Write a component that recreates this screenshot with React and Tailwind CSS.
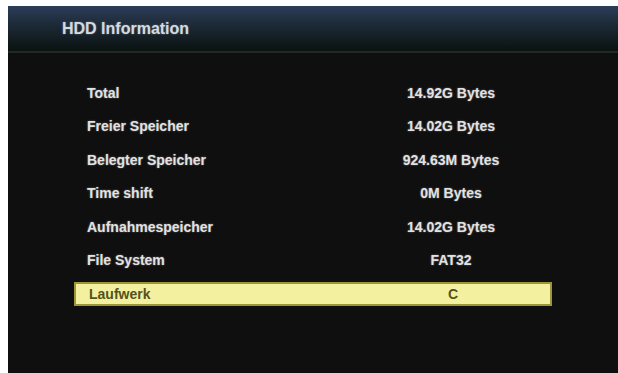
const rows = [
  ["Total", "14.92G Bytes"],
  ["Freier Speicher", "14.02G Bytes"],
  ["Belegter Speicher", "924.63M Bytes"],
  ["Time shift", "0M Bytes"],
  ["Aufnahmespeicher", "14.02G Bytes"],
  ["File System", "FAT32"],
  ["Laufwerk", "C"],
];

export default function App() {
  const selected = 6;

  return (
    <div className="w-[618px] h-[373px] bg-white pl-[8px] pt-[6px] overflow-hidden font-['Liberation_Sans',Arial,sans-serif]">
      <div className="w-full h-full flex flex-col bg-[#0f0f10]">
        {/* title bar */}
        <div className="h-[47px] shrink-0 flex items-center pl-[54px] bg-gradient-to-b from-[#2c3d58] via-[#1a2631] to-[#0b1311] border-b-2 border-[#1f2926]">
          <h1 className="text-[16px] font-bold text-[#d4dae0] [text-shadow:0_0_2px_rgba(200,210,220,0.45)]">
            HDD Information
          </h1>
        </div>

        {/* info list */}
        <div className="flex flex-col gap-[9.5px] pt-[28px] pl-[66px]">
          {rows.map(([label, value], i) => (
            <div
              key={label}
              className={`w-[478px] h-[24px] grid grid-cols-[277px_200px] items-center text-[14px] font-bold ${
                i === selected
                  ? "bg-[#f3f1a0] border-2 border-[#9c9638] text-[#54531e]"
                  : "text-[#e2e2e2] [text-shadow:0_0_2px_rgba(255,255,255,0.4)]"
              }`}>
              <span className="pl-[13px]">{label}</span>
              <span className="text-center">{value}</span>
            </div>
          ))}
        </div>
      </div>
    </div>
  );
}
